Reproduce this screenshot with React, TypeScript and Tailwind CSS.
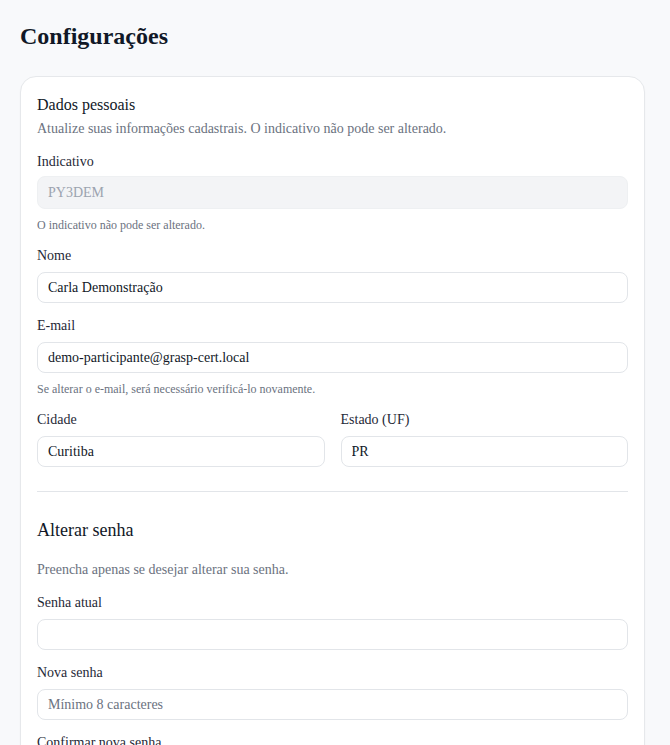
import React from "react";

function Label({ children, className = "" }: { children: React.ReactNode; className?: string }) {
  return <label className={`block text-sm leading-5 text-[#1f2937] ${className}`}>{children}</label>;
}

function TextInput({
  value,
  placeholder,
  type = "text",
}: {
  value?: string;
  placeholder?: string;
  type?: string;
}) {
  return (
    <input
      type={type}
      defaultValue={value}
      placeholder={placeholder}
      className="mt-1.5 block h-[31px] w-full rounded-lg border border-[#e2e5e9] bg-white px-2.5 text-sm text-[#111827] placeholder:text-[#6b7280] outline-none"
    />
  );
}

export default function App() {
  return (
    <div className="min-h-screen bg-[#f8f9fb] pl-5 pr-[25px] pt-5 pb-10 font-['Liberation_Serif',serif] text-[#111827]">
      <h1 className="text-2xl leading-8 font-bold text-[#111827]">Configurações</h1>

      <div className="mt-6 rounded-2xl border border-[#e6e8eb] bg-white p-4 shadow-[0_1px_2px_rgba(0,0,0,0.03)]">
        <h2 className="text-base leading-6 text-[#111827]">Dados pessoais</h2>
        <p className="mt-0.5 text-sm leading-5 text-[#6b7280]">
          Atualize suas informações cadastrais. O indicativo não pode ser alterado.
        </p>

        <div className="mt-[13px]">
          <Label>Indicativo</Label>
          <input
            type="text"
            defaultValue="PY3DEM"
            disabled
            className="mt-1 block h-[33px] w-full rounded-lg border border-[#eef0f2] bg-[#f3f4f6] px-2.5 text-sm text-[#9ca3af] outline-none"
          />
          <p className="mt-2 text-xs leading-4 text-[#6b7280]">O indicativo não pode ser alterado.</p>
        </div>

        <div className="mt-[13px]">
          <Label>Nome</Label>
          <TextInput value="Carla Demonstração" />
        </div>

        <div className="mt-[13px]">
          <Label>E-mail</Label>
          <TextInput value="demo-participante@grasp-cert.local" type="email" />
          <p className="mt-2 text-xs leading-4 text-[#6b7280]">
            Se alterar o e-mail, será necessário verificá-lo novamente.
          </p>
        </div>

        <div className="mt-[13px] grid grid-cols-2 gap-4">
          <div>
            <Label>Cidade</Label>
            <TextInput value="Curitiba" />
          </div>
          <div>
            <Label>Estado (UF)</Label>
            <TextInput value="PR" />
          </div>
        </div>

        <div className="mt-6 border-t border-[#e2e5e9]" />

        <div className="pt-6">
          <h2 className="text-lg leading-7 text-[#111827]">Alterar senha</h2>
          <p className="mt-4 text-sm leading-5 text-[#6b7280]">
            Preencha apenas se desejar alterar sua senha.
          </p>

          <div className="mt-[13px]">
            <Label>Senha atual</Label>
            <TextInput type="password" />
          </div>

          <div className="mt-[13px]">
            <Label>Nova senha</Label>
            <TextInput type="password" placeholder="Mínimo 8 caracteres" />
          </div>

          <div className="mt-[13px]">
            <Label>Confirmar nova senha</Label>
            <TextInput type="password" />
          </div>
        </div>

        <div className="mt-5 flex justify-end">
          <button className="rounded-lg bg-[#111827] px-4 py-2 text-sm text-white">Salvar alterações</button>
        </div>
      </div>
    </div>
  );
}
